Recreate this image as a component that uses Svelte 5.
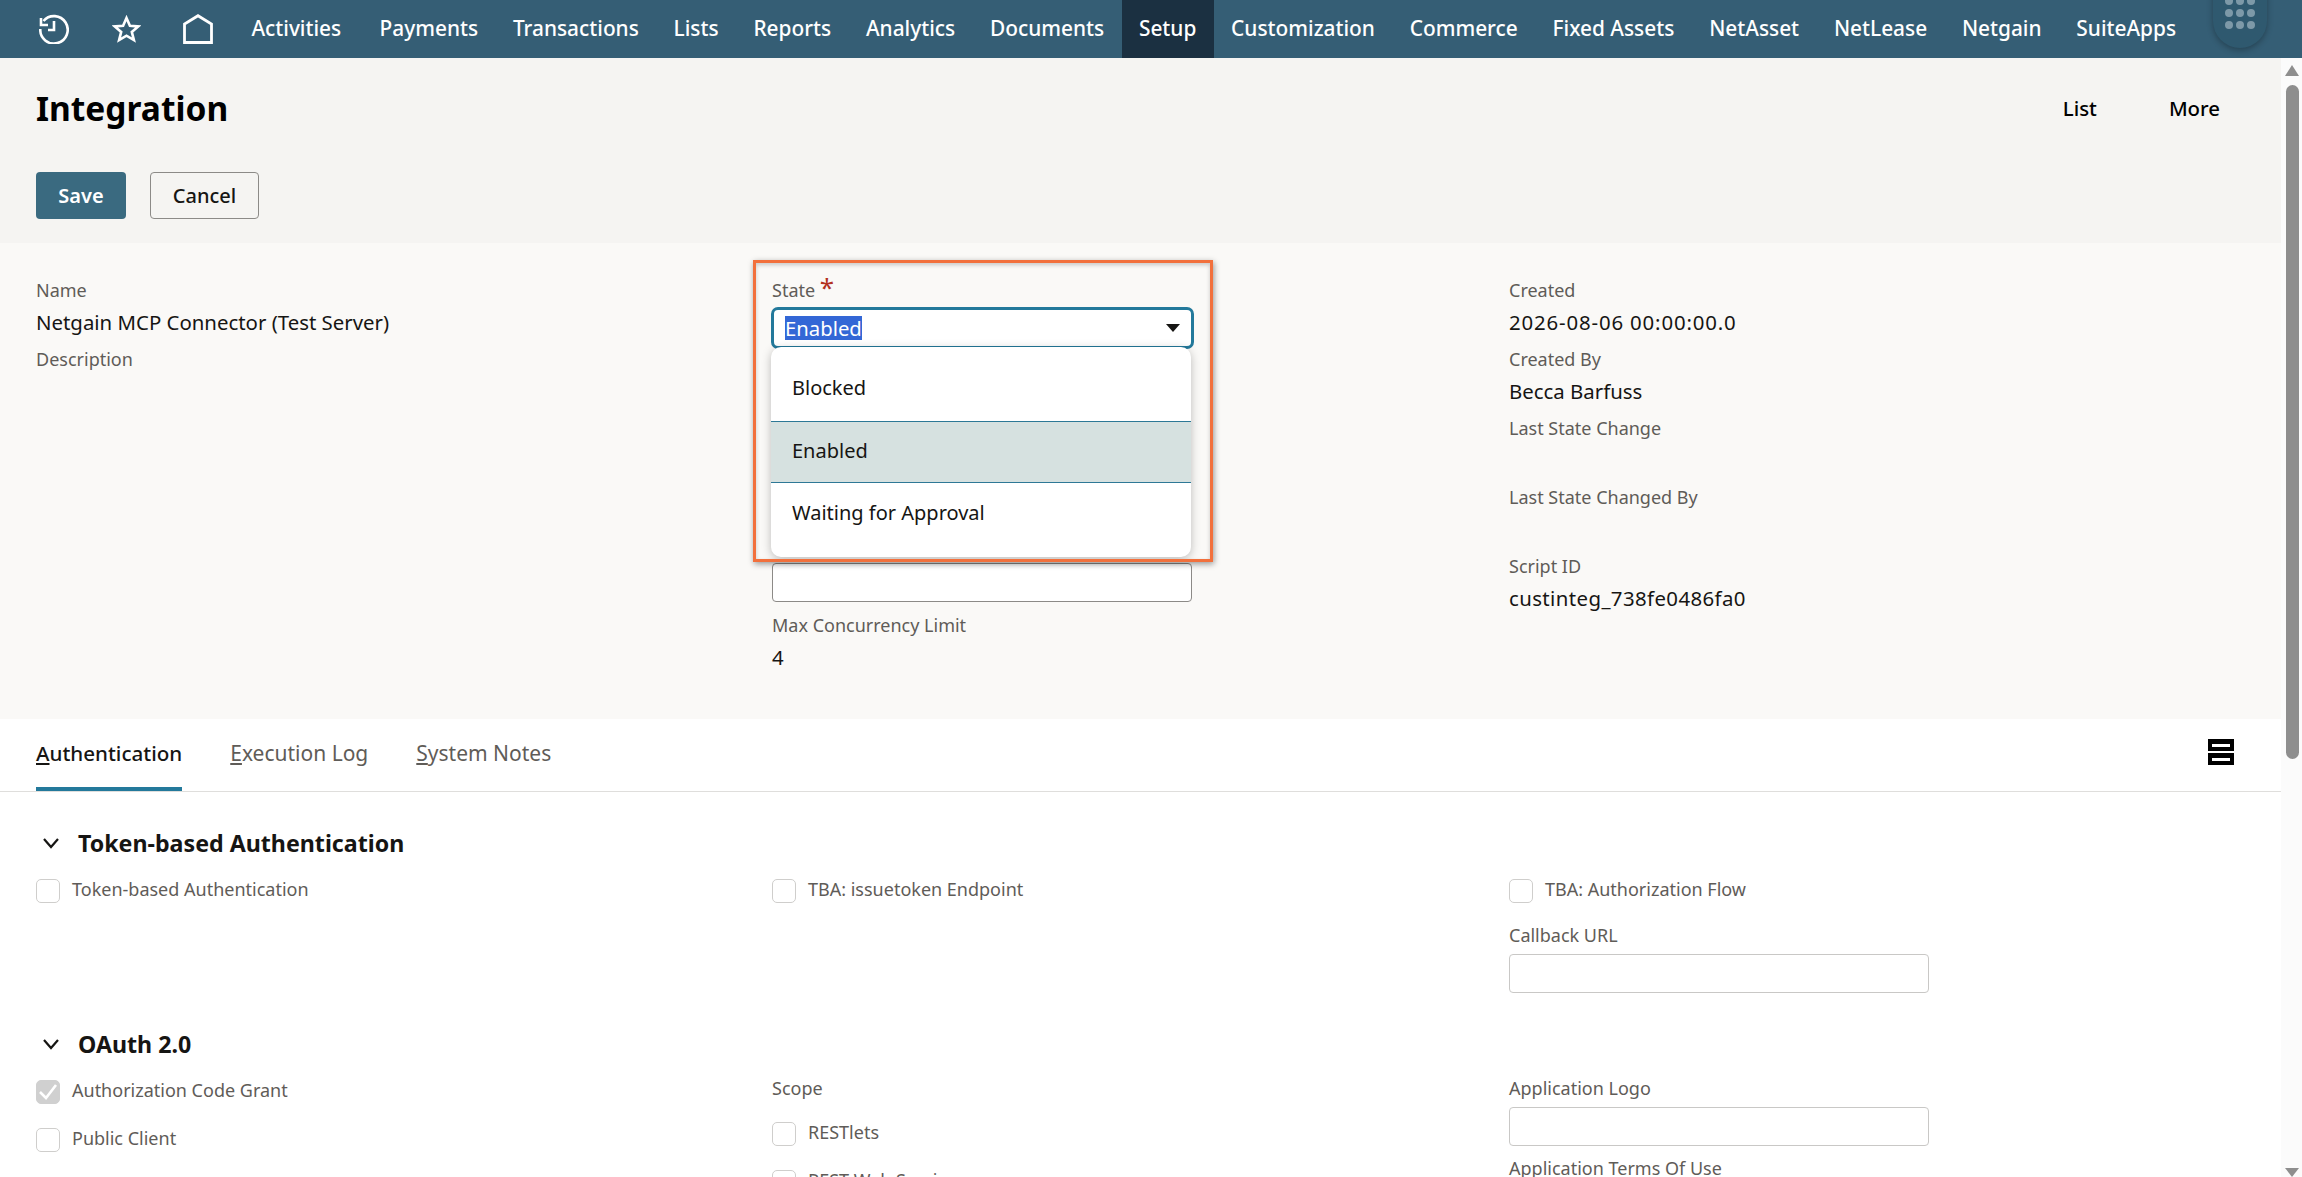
<script>
const navItems = ['Activities','Payments','Transactions','Lists','Reports','Analytics','Documents','Setup','Customization','Commerce','Fixed Assets','NetAsset','NetLease','Netgain','SuiteApps'];
const stateOptions = ['Blocked','Enabled','Waiting for Approval'];
</script>

<div class="page">
  <nav class="topnav">
    <div class="icons">
      <svg width="30" height="30" viewBox="0 0 30 30" fill="none" stroke="#fff" stroke-width="2.6">
        <path d="M4.500 7A13.700 13.700 0 1 1 1.300 15" />
        <path d="M2 4v7h7M15 7v9H9" />
      </svg>
      <svg width="29" height="28" viewBox="0 0 29 28" fill="none" stroke="#fff" stroke-width="2.6">
        <path d="M14.500 3l3.400 7.800 8.300.6-6.400 5.500 2.100 8.200-7.400-4.400-7.400 4.400 2.100-8.200-6.400-5.500 8.300-.6z" />
      </svg>
      <svg width="30" height="30" viewBox="0 0 30 30" fill="none" stroke="#fff" stroke-width="2.800">
        <path d="M1.500 28.500V10L15 1.700 28.500 10v18.500z" />
      </svg>
    </div>
    {#each navItems as item}
      <a class="navitem" class:active={item === 'Setup'}>{item}</a>
    {/each}
    <div class="launcher">
      <div class="dots">
        {#each Array(9) as _}<i></i>{/each}
      </div>
    </div>
  </nav>

  <div class="main">
    <div class="content">
      <header class="pagehead">
        <div class="titlerow">
          <h1>Integration</h1>
          <div class="links"><span>List</span><span>More</span></div>
        </div>
        <div class="buttons">
          <button class="save">Save</button>
          <button class="cancel">Cancel</button>
        </div>
      </header>

      <section class="primary">
        <div class="col">
          <div class="field"><label>Name</label><div class="val">Netgain MCP Connector (Test Server)</div></div>
          <div class="field"><label>Description</label></div>
        </div>
        <div class="col">
          <div class="statefield">
            <label>State <span class="req">*</span></label>
            <div class="select"><span class="sel">Enabled</span><b class="caret"></b></div>
            <div class="menu">
              {#each stateOptions as opt}
                <div class="opt" class:current={opt === 'Enabled'}>{opt}</div>
              {/each}
            </div>
            <div class="callout"></div>
          </div>
          <div class="input under"></div>
          <div class="field maxc"><label>Max Concurrency Limit</label><div class="val">4</div></div>
        </div>
        <div class="col">
          <div class="field"><label>Created</label><div class="val date">2026-08-06 00:00:00.0</div></div>
          <div class="field"><label>Created By</label><div class="val">Becca Barfuss</div></div>
          <div class="field"><label>Last State Change</label></div>
          <div class="field"><label>Last State Changed By</label></div>
          <div class="field"><label>Script ID</label><div class="val script">custinteg_738fe0486fa0</div></div>
        </div>
      </section>

      <div class="tabs">
        <span class="tab on"><u>A</u>uthentication</span>
        <span class="tab"><u>E</u>xecution Log</span>
        <span class="tab"><u>S</u>ystem Notes</span>
        <svg class="stack" width="26" height="26" viewBox="0 0 26 26">
          <path d="M0 0h26v12H0zM0 14h26v12H0z" fill="#000"/>
          <path d="M4 5h18v3H4zM4 19h18v3H4z" fill="#fff"/>
        </svg>
      </div>

      <section class="group">
        <h2><svg width="18" height="12" viewBox="0 0 18 12" fill="none" stroke="#161513" stroke-width="2.2"><path d="M2 2l7 8 7-8"/></svg>Token-based Authentication</h2>
        <div class="cols">
          <div class="col"><div class="check"><i class="box"></i>Token-based Authentication</div></div>
          <div class="col"><div class="check"><i class="box"></i>TBA: issuetoken Endpoint</div></div>
          <div class="col">
            <div class="check"><i class="box"></i>TBA: Authorization Flow</div>
            <div class="cb"><label>Callback URL</label><div class="input"></div></div>
          </div>
        </div>
      </section>

      <section class="group">
        <h2><svg width="18" height="12" viewBox="0 0 18 12" fill="none" stroke="#161513" stroke-width="2.2"><path d="M2 2l7 8 7-8"/></svg>OAuth 2.0</h2>
        <div class="cols">
          <div class="col">
            <div class="check"><i class="box ticked"><svg width="20" height="16" viewBox="0 0 20 16" fill="none" stroke="#fff" stroke-width="2.6"><path d="M2 8l6 6L18 1"/></svg></i>Authorization Code Grant</div>
            <div class="check next"><i class="box"></i>Public Client</div>
          </div>
          <div class="col shifted">
            <label>Scope</label>
            <div class="check scope"><i class="box"></i>RESTlets</div>
            <div class="check next"><i class="box"></i>REST Web Services</div>
          </div>
          <div class="col shifted">
            <div><label>Application Logo</label><div class="input"></div></div>
            <label class="terms">Application Terms Of Use</label>
          </div>
        </div>
      </section>
    </div>

    <div class="scrollbar">
      <b class="up"></b>
      <div class="thumb"></div>
      <b class="down"></b>
    </div>
  </div>
</div>

<style>
:global(body) { margin: 0; overflow: hidden; background: #fff; }
.page { width: 2302px; height: 1177px; overflow: hidden; font-family: "Noto Sans", "Open Sans", sans-serif; color: #161513; font-size: 18px; }

.topnav { height: 58px; background: #355e75; display: flex; align-items: center; position: relative; color: #fff; }
.icons { display: flex; align-items: center; gap: 42.5px; padding-left: 39px; width: 234px; box-sizing: border-box; }
.icons svg { flex: none; }
.navitem { height: 58px; line-height: 57px; padding: 0 17.4px; font-size: 20.85px; font-weight: 500; color: #fff; white-space: nowrap; }
.navitem:nth-child(2) { padding-right: 21px; }
.navitem.active { background: #1b3041; }
.launcher { position: absolute; right: 35px; top: -30px; width: 54px; height: 78px; border-radius: 0 0 27px 27px; background: #2f596f; box-shadow: 0 2px 6px rgba(0,0,0,.3); }
.dots { position: absolute; left: 12px; top: 27px; display: grid; grid-template-columns: repeat(3, 8px); gap: 4px 3px; }
.dots i { width: 8px; height: 8px; border-radius: 50%; background: #7d99a8; }

.main { display: flex; height: 1119px; }
.content { width: 2281px; overflow: hidden; }
.scrollbar { width: 21px; position: relative; background: #fbfbfb; }
.thumb { position: absolute; top: 27px; left: 5px; width: 13px; height: 674px; border-radius: 7px; background: #8e8e8e; }
.up, .down { position: absolute; left: 4px; width: 0; height: 0; border-left: 7.5px solid transparent; border-right: 7.5px solid transparent; }
.up { top: 7px; border-bottom: 11px solid #8e8e8e; }
.down { bottom: 0; border-top: 9px solid #8e8e8e; }

.pagehead { background: #f5f4f2; height: 185px; padding: 0 36px; box-sizing: border-box; }
.titlerow { display: flex; justify-content: space-between; align-items: center; padding-top: 28px; height: 44px; }
h1 { margin: 0; font-size: 33.5px; font-weight: 700; color: #000; }
.links { display: flex; gap: 72px; font-size: 20.4px; font-weight: 500; color: #000; padding-right: 25px; }
.buttons { display: flex; gap: 24px; margin-top: 42px; }
button { height: 47px; border-radius: 4px; font: 600 20px "Noto Sans", sans-serif; padding: 0 20px; }
.save { background: #3a6a80; color: #fff; border: none; width: 90px; }
.cancel { background: transparent; border: 1px solid #8c8a87; color: #161513; font-weight: 500; width: 109px; }

.primary { background: #faf9f7; height: 476px; box-sizing: border-box; padding: 36px 36px 0; display: grid; grid-template-columns: 736px 737px 1fr; }
.field { min-height: 69px; }
label { display: block; font-size: 18px; color: #5f5c58; line-height: 22px; height: 24px; }
.val { font-size: 20.4px; line-height: 38px; color: #161513; }
.date { letter-spacing: .85px; }
.script { letter-spacing: .4px; }
.statefield { position: relative; height: 284px; }
.req { color: #b3311f; font-size: 26px; line-height: 10px; }
.select { width: 423px; height: 42px; box-sizing: border-box; border: 3px solid #23799b; border-radius: 7px; background: #fff; margin: 4px 0 0 -1px; display: flex; align-items: center; justify-content: space-between; padding: 0 11px 0 11px; font-size: 20.3px; }
.sel { background: #3367d6; color: #fff; line-height: 24px; height: 24px; }
.caret { border-left: 7px solid transparent; border-right: 7px solid transparent; border-top: 8px solid #161513; }
.menu { position: absolute; left: -1px; top: 68px; width: 420px; height: 210px; background: #fff; border-radius: 10px; box-shadow: 0 2px 10px rgba(0,0,0,.25); padding-top: 12px; box-sizing: border-box; z-index: 2; }
.opt { height: 62px; line-height: 57px; padding-left: 21px; font-size: 20px; color: #161513; box-sizing: border-box; }
.opt:last-child { line-height: 60px; }
.opt.current { background: #d6e1e0; border-top: 1px solid #2d7896; border-bottom: 1px solid #2d7896; }
.callout { position: absolute; left: -19px; top: -19px; width: 460px; height: 302px; border: 3px solid #f2703c; box-sizing: border-box; box-shadow: 1px 2px 6px rgba(0,0,0,.4), inset 0 2px 4px rgba(0,0,0,.2); z-index: 3; pointer-events: none; }
.input { width: 420px; height: 39px; box-sizing: border-box; border: 1px solid #c9c8c6; border-radius: 4px; background: #fff; margin-top: 6px; }
.under { margin-top: 0; border-color: #8c8a87; }
.maxc { margin-top: 12px; }

.tabs { height: 73px; box-sizing: border-box; border-bottom: 1px solid #dfdedc; padding: 0 36px; display: flex; gap: 48px; position: relative; background: #fff; }
.tab { font-size: 21px; color: #5f5c58; line-height: 69px; height: 72px; box-sizing: border-box; }
.tab.on { color: #161513; border-bottom: 4px solid #23799b; font-size: 20.6px; font-weight: 500; }
.stack { position: absolute; right: 47px; top: 20px; }

.group { padding: 0 36px; }
h2 { margin: 0; font-size: 23.2px; font-weight: 700; height: 34px; line-height: 34px; padding-top: 34px; display: flex; align-items: center; gap: 18px; }
h2 svg { margin-left: 6px; }
.cols { display: grid; grid-template-columns: 736px 737px 1fr; margin-top: 19px; }
.check { display: flex; align-items: flex-start; gap: 12px; font-size: 18px; line-height: 21px; color: #5f5c58; height: 24px; }
.box { width: 24px; height: 24px; flex: none; box-sizing: border-box; border: 1px solid #cfcecc; border-radius: 5px; background: #fff; display: flex; align-items: center; justify-content: center; }
.ticked { background: #d0d0d0; border-color: #d0d0d0; }
.cb { margin-top: 21px; }
.next { margin-top: 24px; }
.shifted { margin-top: -3px; }
.scope { margin-top: 21px; }
.terms { margin-top: 11px; }
</style>
